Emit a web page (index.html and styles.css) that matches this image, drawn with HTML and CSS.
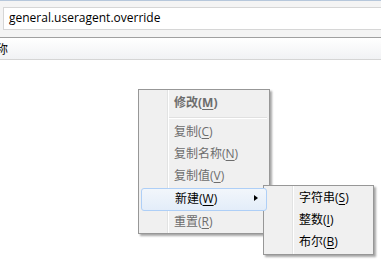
FILE: index.html
```html
<!DOCTYPE html>
<html>
<head>
<meta charset="utf-8">
<link rel="stylesheet" href="styles.css">
</head>
<body>
<div class="toolbar">
  <div class="search">general.useragent.override</div>
</div>
<div class="header"><span class="col">称</span></div>

<div class="menu main">
  <div class="item disabled bold">修改(<u>M</u>)</div>
  <div class="sep"></div>
  <div class="item disabled">复制(<u>C</u>)</div>
  <div class="item disabled">复制名称(<u>N</u>)</div>
  <div class="item disabled">复制值(<u>V</u>)</div>
  <div class="item active">新建(<u>W</u>)<span class="arrow"></span></div>
  <div class="item disabled">重置(<u>R</u>)</div>
</div>

<div class="menu sub">
  <div class="item">字符串(<u>S</u>)</div>
  <div class="item">整数(<u>I</u>)</div>
  <div class="item">布尔(<u>B</u>)</div>
</div>
</body>
</html>
```

FILE: styles.css
```css
html, body {
  margin: 0;
  padding: 0;
  background: #ffffff;
  width: 381px;
  height: 278px;
  overflow: hidden;
  font-family: "Open Sans", "Noto Sans CJK SC", sans-serif;
}

.toolbar {
  border-top: 1px solid #b6c7db;
  background: #f4f4f4;
  padding: 6px 0 0 3px;
  box-sizing: border-box;
  border-bottom: 1px solid #a0a0a0;
  height: 38px;
}

.search {
  height: 23px;
  box-sizing: border-box;
  background: #ffffff;
  border: 1px solid #d6d6d6;
  border-right: none;
  font-family: "Open Sans", "Noto Sans", sans-serif;
  font-size: 12px;
  line-height: 20px;
  padding-left: 5px;
  color: #000;
}

.header {
  height: 22px;
  box-sizing: border-box;
  border-bottom: 1px solid #d5d5d5;
  background: linear-gradient(#ffffff, #f1f2f4);
  font-family: "Noto Sans CJK SC", sans-serif;
  font-size: 12px;
  line-height: 21px;
  color: #000;
  overflow: hidden;
  white-space: nowrap;
}

.header .col {
  display: inline-block;
  margin-left: -4px;
}

.menu {
  position: absolute;
  background: #f0f0f0;
  border: 1px solid #979797;
  box-shadow: 2px 2px 2px rgba(0, 0, 0, 0.35);
  box-sizing: border-box;
  font-size: 12px;
}

.menu::before {
  content: "";
  position: absolute;
  top: 0;
  bottom: 0;
  left: 28px;
  width: 1px;
  background: #e2e3e3;
  border-right: 1px solid #ffffff;
}

.main {
  left: 138px;
  top: 89px;
  width: 132px;
  height: 145px;
  padding: 2px 0;
}

.sub {
  left: 263px;
  top: 185px;
  width: 111px;
  height: 70px;
  padding: 1px 0;
}

.item {
  position: relative;
  height: 22px;
  line-height: 21px;
  padding-left: 35px;
  color: #000;
  white-space: nowrap;
}

.item u {
  text-decoration-thickness: 1px;
  text-underline-offset: 2px;
}

.disabled {
  color: #6d6d6d;
}

.bold {
  font-weight: bold;
}

.active {
  margin: 1px 2px 0;
  padding-left: 33px;
  border: 1px solid #aecff7;
  border-radius: 3px;
  height: 21px;
  line-height: 19px;
  background: linear-gradient(#f2f6fb, #e3edf9);
  z-index: 1;
}

.arrow {
  position: absolute;
  left: 112px;
  top: 6px;
  width: 0;
  height: 0;
  border-top: 3.5px solid transparent;
  border-bottom: 3.5px solid transparent;
  border-left: 4px solid #000;
}

.sep {
  height: 7px;
  margin-left: 30px;
  margin-right: 2px;
  position: relative;
}

.sep::after {
  content: "";
  position: absolute;
  left: 0;
  right: 0;
  top: 3px;
  height: 1px;
  background: #e0e0e0;
  border-bottom: 1px solid #ffffff;
}
```
